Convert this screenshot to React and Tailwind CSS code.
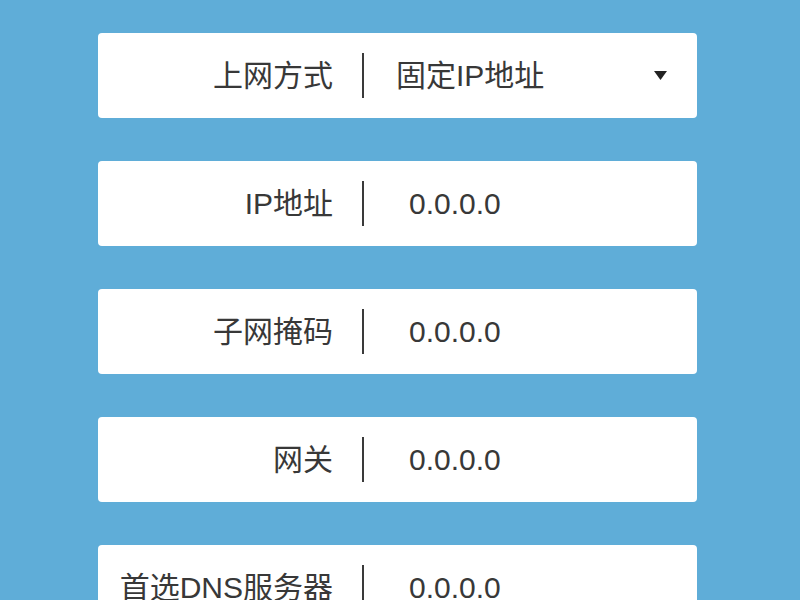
import React from 'react';

const rows = [
    { label: '上网方式', value: '固定IP地址', select: true },
    { label: 'IP地址', value: '0.0.0.0' },
    { label: '子网掩码', value: '0.0.0.0' },
    { label: '网关', value: '0.0.0.0' },
    { label: '首选DNS服务器', value: '0.0.0.0' },
];

const Row = ({ label, value, select }) => (
    <div className="flex items-center w-[599px] h-[85px] shrink-0 bg-white rounded-[4px]">
        <div className="w-[235px] text-right whitespace-nowrap">{label}</div>
        <div className="ml-[29px] w-[2px] h-[45px] bg-[#3a3a3a]" />
        <div className={`flex-1 flex items-center ${select ? 'pl-[32px]' : 'pl-[45px]'}`}>
            <span className="whitespace-nowrap">{value}</span>
            {select && (
                <svg className="ml-auto mr-[30px]" width="13" height="9" viewBox="0 0 13 9">
                    <polygon points="0,0 13,0 6.5,9" fill="#222" />
                </svg>
            )}
        </div>
    </div>
);

export default function App() {
    return (
        <div
            className="w-[800px] h-[600px] overflow-hidden bg-[#5fadd8] pt-[33px] pl-[98px] flex flex-col gap-[43px] text-[30px] text-[#383838]"
            style={{ fontFamily: '"Liberation Sans", "Noto Sans CJK SC", sans-serif' }}
        >
            {rows.map(r => <Row key={r.label} {...r} />)}
        </div>
    );
}
